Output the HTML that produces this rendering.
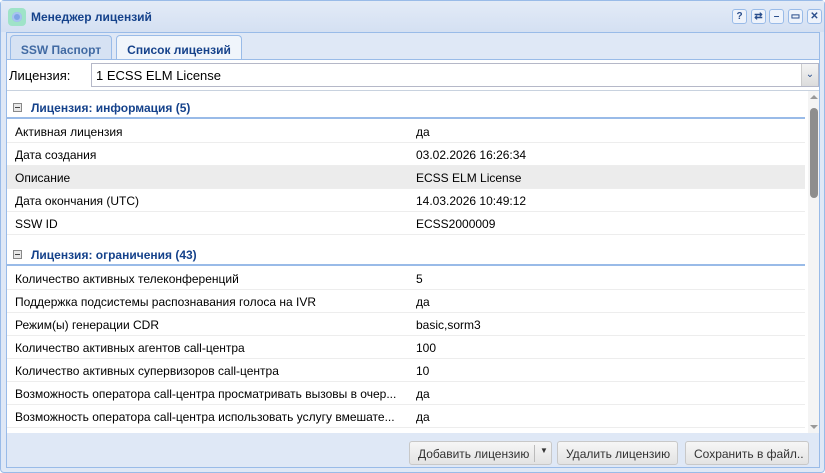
<!DOCTYPE html>
<html><head><meta charset="utf-8"><style>
*{box-sizing:border-box;margin:0;padding:0}
body{width:825px;height:473px;background:#fff;font-family:"Liberation Sans",sans-serif;font-size:12px;color:#000;position:relative;overflow:hidden}
.win{position:absolute;left:0;top:0;width:825px;height:473px;border:1px solid #99bbe8;border-radius:4px;background:#dfe8f6}
.hdr{position:absolute;left:0;top:0;width:823px;height:31px;background:linear-gradient(#e3ebf7,#d4e0f2)}
.title{position:absolute;left:30px;top:9px;font-weight:bold;font-size:12px;color:#15428b}
.ico{position:absolute;left:7px;top:7px;width:18px;height:18px;border-radius:4px;background:#9fe3c8}
.ico:after{content:"";position:absolute;left:4px;top:4px;width:10px;height:10px;border-radius:50%;background:#7fa5e6;box-shadow:inset 0 0 0 2px #a8c4f0}
.tb{position:absolute;top:8px;width:15px;height:15px;border:1px solid #99bbe8;border-radius:3px;background:#eef3fb;color:#2a4e8c;font-size:10px;font-weight:bold;text-align:center;line-height:13px}
.body{position:absolute;left:5px;top:31px;width:814px;height:436px;border:1px solid #99bbe8;background:#dfe8f6}
.tab{position:absolute;top:2px;height:25px;border:1px solid #99bbe8;border-bottom:none;border-radius:4px 4px 0 0;font-weight:bold;padding:7px 0 0 0;text-align:center}
.strip{position:absolute;left:0;top:26px;width:812px;height:1px;background:#99bbe8}
.lic{position:absolute;left:0;top:27px;width:812px;height:30px;background:#fff}
.grid{position:absolute;left:0;top:57px;width:812px;height:343px;background:#fff;border-top:1px solid #c8d2df}
.row{position:absolute;left:0;width:798px;height:23px;border-bottom:1px solid #ededed}
.row span{position:absolute;top:5px}
.c1{left:8px}.c2{left:409px}
.grp{position:absolute;left:0;width:798px;height:22px;border-bottom:2px solid #99bbe8;color:#15428b;font-weight:bold}
.grp span{position:absolute;left:24px;top:4px}
.grp i{position:absolute;left:6px;top:6px;width:9px;height:9px;border:1px solid #888;background:#e8e8e8}
.grp i:after{content:"";position:absolute;left:1px;top:3px;width:5px;height:1px;background:#444}
.btn{position:absolute;top:408px;height:24px;border:1px solid #c8c8c8;border-radius:3px;background:linear-gradient(#f6f6f6,#e3e3e3);padding:5px 0 0 8px;color:#333}
</style></head><body>
<div class="win">
<div class="hdr"><div class="ico"></div><div class="title">Менеджер лицензий</div>
<div class="tb" style="left:731px">?</div>
<div class="tb" style="left:750px">⇄</div>
<div class="tb" style="left:768px">–</div>
<div class="tb" style="left:787px">▭</div>
<div class="tb" style="left:806px">✕</div>
</div>
<div class="body">
<div class="tab" style="left:3px;width:102px;background:#d6e2f3;color:#416aa3">SSW Паспорт</div>
<div class="tab" style="left:109px;width:126px;background:#f0f5fb;color:#15428b;height:26px">Список лицензий</div>
<div class="strip"></div>
<div class="lic">
<span style="position:absolute;left:2px;top:8px;font-size:13px">Лицензия:</span>
<div style="position:absolute;left:84px;top:3px;width:728px;height:24px;border:1px solid #b5b8c8;background:#fff"><span style="position:absolute;left:4px;top:4px;font-size:13px">1 ECSS ELM License</span>
<div style="position:absolute;right:0;top:0;width:17px;height:22px;background:linear-gradient(#f4f4f4,#dcdcdc);border-left:1px solid #ccc;color:#2a4e8c;font-size:10px;text-align:center;line-height:22px">⌄</div></div>
</div>
<div class="grid">
<div class="grp" style="top:6px"><i></i><span>Лицензия: информация (5)</span></div>
<div class="row" style="top:29px"><span class="c1">Активная лицензия</span><span class="c2">да</span></div>
<div class="row" style="top:52px"><span class="c1">Дата создания</span><span class="c2">03.02.2026 16:26:34</span></div>
<div class="row" style="top:75px;background:#ececec"><span class="c1">Описание</span><span class="c2">ECSS ELM License</span></div>
<div class="row" style="top:98px"><span class="c1">Дата окончания (UTC)</span><span class="c2">14.03.2026 10:49:12</span></div>
<div class="row" style="top:121px"><span class="c1">SSW ID</span><span class="c2">ECSS2000009</span></div>
<div class="grp" style="top:153px"><i></i><span>Лицензия: ограничения (43)</span></div>
<div class="row" style="top:176px"><span class="c1">Количество активных телеконференций</span><span class="c2">5</span></div>
<div class="row" style="top:199px"><span class="c1">Поддержка подсистемы распознавания голоса на IVR</span><span class="c2">да</span></div>
<div class="row" style="top:222px"><span class="c1">Режим(ы) генерации CDR</span><span class="c2">basic,sorm3</span></div>
<div class="row" style="top:245px"><span class="c1">Количество активных агентов call-центра</span><span class="c2">100</span></div>
<div class="row" style="top:268px"><span class="c1">Количество активных супервизоров call-центра</span><span class="c2">10</span></div>
<div class="row" style="top:291px"><span class="c1">Возможность оператора call-центра просматривать вызовы в очер...</span><span class="c2">да</span></div>
<div class="row" style="top:314px"><span class="c1">Возможность оператора call-центра использовать услугу вмешате...</span><span class="c2">да</span></div>
<div style="position:absolute;left:801px;top:0;width:11px;height:342px;background:#f4f4f4">
<div style="position:absolute;left:2px;top:4px;width:0;height:0;border-left:4px solid transparent;border-right:4px solid transparent;border-bottom:4px solid #999"></div>
<div style="position:absolute;left:2px;top:17px;width:8px;height:90px;border-radius:4px;background:#8e8e8e"></div>
<div style="position:absolute;left:2px;bottom:4px;width:0;height:0;border-left:4px solid transparent;border-right:4px solid transparent;border-top:4px solid #999"></div>
</div>
</div>
<div class="btn" style="left:402px;width:143px">Добавить лицензию<span style="position:absolute;left:124px;top:3px;width:1px;height:17px;background:#bbb"></span><span style="position:absolute;left:130px;top:4px;font-size:8px">▼</span></div>
<div class="btn" style="left:550px;width:121px">Удалить лицензию</div>
<div class="btn" style="left:678px;width:124px">Сохранить в файл..</div>
</div>
</div>
</body></html>
